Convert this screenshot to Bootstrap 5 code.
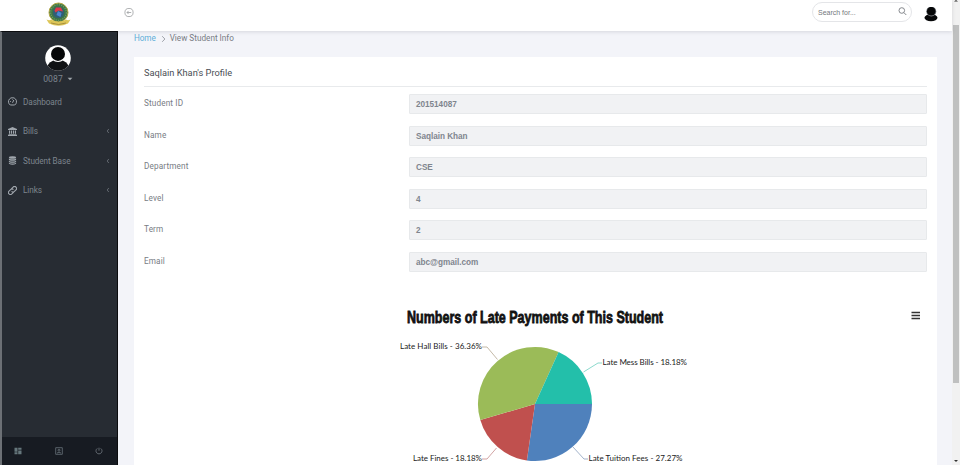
<!DOCTYPE html>
<html lang="en">
<head>
<meta charset="utf-8">
<title>View Student Info</title>
<link href="https://cdn.jsdelivr.net/npm/bootstrap@5.3.0/dist/css/bootstrap.min.css" rel="stylesheet">
<style>
html,body{height:465px;overflow:hidden}
body{font-family:Roboto,"Liberation Sans",sans-serif;font-size:8.2px;line-height:12px;color:#787c84;background:#f3f4f9}
svg{display:block;flex:none}
.topbar{height:31px;background:#fff;box-shadow:0 1px 4px rgba(60,60,80,.16);z-index:2}
.brand-box{width:118px;height:31px;padding:2px 0 0 46px}
.toggle-ico{margin:8px 0 0 6px}
.search-box{width:100px;height:20px;margin-top:2px;padding:0 4px 0 5px;border:1px solid #e4e5e8;border-radius:10px;font:7px/19px "Liberation Sans",sans-serif;color:#74777c}
.user-ico{margin:7px 14px 0 12px}
.side{width:118px;background:#272c33;border-left:2px solid #6c7075;border-right:1px solid #0b0c0e;border-top:1px solid #08090b;color:#7d858e}
.side-user{padding:13px 3px 0 0;height:55px}
.side-num{line-height:10px;padding-top:2px;font-size:8.6px;letter-spacing:.1px}
.side-link{height:29.5px;padding:0 7px 0 6px;letter-spacing:-.08px}
.side-link svg{margin-right:6px}
.side-link .chev{margin:0}
.side-foot{height:29px;background:#171b22;padding:0 14px 0 12px}
.crumbs{height:26px;padding:1px 0 0 16px}
.crumbs a{color:#5faed8;letter-spacing:-.1px}
.crumb-sep{margin:4px 3px 0 4px}
.profile{width:803px;margin-left:16px;padding:0 10px;background:#fff}
.profile-head{height:30px;line-height:31px;font-size:9.25px;color:#4a4e54;border-bottom:1px solid #e8eaec}
.fields{padding-top:7px}
.field-row{height:31.6px}
.field-label{width:265px;padding-top:3px;letter-spacing:.14px}
.field-val{height:20px;padding:0 6px;border:1px solid #e7e9eb;border-radius:1px;background:#f1f2f4;font:bold 8.2px/19px "Liberation Sans",sans-serif;letter-spacing:-.03px;color:#7f858e}
.chart{margin:10px -10px 0}
.sbar{width:8px;height:465px;background:#f1f1f1}
.sbar-thumb{height:358px;margin-left:1px;margin-right:1px;background:#bfc0c0}
</style>
<script src="https://cdn.jsdelivr.net/npm/bootstrap@5.3.0/dist/js/bootstrap.bundle.min.js"></script>
</head>
<body>
<div class="d-flex h-100">
 <div class="d-flex flex-column flex-grow-1">
  <header class="topbar d-flex position-relative align-items-start flex-shrink-0">
   <div class="brand-box">
    <svg width="25" height="25" viewBox="0 0 25 25">
     <circle cx="12.500" cy="10.5" r="9.5" fill="#3b7548" stroke="#b4a743"/>
     <circle cx="12.500" cy="10.5" r="7.8" fill="none" stroke="#739a60" stroke-width="1.2" stroke-dasharray="1.3 1"/>
     <circle cx="12.500" cy="10.5" r="5.6" fill="#315e77"/>
     <path d="M8.500 8.500l1.500-3 5 0 2 4-4.500-1-3 2z" fill="#e03a48"/>
     <path d="M12 9l3.500 2-1 4-4-2z" fill="#4a87d4"/>
     <path d="M.5 17.500q3 1.500 4.500 0 7.500 4.500 15 0 2 1.500 4.500 0l-2.500 4q-9.500 4.500-19 0z" fill="#ddc657"/>
     <path d="M5 21q7.500 3 15 0" fill="none" stroke="#9b813a" stroke-width=".8"/>
    </svg>
   </div>
   <svg class="toggle-ico" width="10" height="10" viewBox="0 0 10 10" fill="none" stroke="#9a9da0" stroke-width=".8"><circle cx="5" cy="4.5" r="4.1"/><path d="M7.2 4.5H3M4.6 2.9L3 4.5l1.6 1.6"/></svg>
   <div class="search-box d-flex justify-content-between ms-auto"><span>Search for...</span>
    <svg class="mt-1" width="9" height="9" viewBox="0 0 9 9" fill="none" stroke="#777b80" stroke-width=".9"><circle cx="3.8" cy="3.5" r="2.8"/><path d="M5.9 5.6L8.3 8"/></svg>
   </div>
   <svg class="user-ico" width="14" height="15" viewBox="0 0 14 15"><ellipse cx="7" cy="10.8" rx="6.5" ry="3.5" fill="#060708"/><circle cx="7.3" cy="4.5" r="5" fill="#777b80"/><circle cx="7.2" cy="4.2" r="4.3" fill="#050607"/></svg>
  </header>
  <div class="d-flex flex-grow-1">
   <nav class="side d-flex flex-column flex-shrink-0">
    <div class="side-user d-flex flex-column align-items-center">
     <svg width="26" height="27" viewBox="0 0 26 27"><defs><clipPath id="av"><circle cx="13" cy="13" r="12.8"/></clipPath></defs><g clip-path="url(#av)"><rect width="26" height="27" fill="#fff"/><ellipse cx="13" cy="24" rx="11" ry="9.500" fill="#101214"/><circle cx="13" cy="9.2" r="7.9" fill="#fff"/><circle cx="13" cy="8.900" r="7" fill="#060708"/></g></svg>
     <div class="side-num d-flex align-items-center">0087<svg class="ms-1" width="6" height="4" viewBox="0 0 6 4"><path d="M.6.8h4.8L3 3.2z" fill="#a0a6ac"/></svg></div>
    </div>
    <a class="side-link d-flex align-items-center text-reset text-decoration-none"><svg width="9" height="9" viewBox="0 0 9 9" fill="none" stroke="#a0a6ad"><path d="M2.300 8a4 4 0 1 1 4.4 0z"/><path d="M4.5 5.8L5.8 3M2 4.5h.8M4.5 1.8v.7"/></svg>Dashboard</a>
    <a class="side-link d-flex align-items-center text-reset text-decoration-none"><svg width="9" height="9" viewBox="0 0 9 9" fill="#a0a6ad"><path d="M4.5 0L9 2v1H0V2zM1 3.5h1.2v3.2H1zM3 3.5h1.1v3.2H3zM5 3.5h1.1v3.2H5zM6.9 3.5H8v3.2H6.9zM.5 7h8v.8H.5zM0 8.1h9V9H0z"/></svg>Bills<svg class="chev ms-auto" width="4" height="6" viewBox="0 0 4 6"><path d="M2.8 1L1.2 3l1.6 2" fill="none" stroke="#7b828a" stroke-width=".7"/></svg></a>
    <a class="side-link d-flex align-items-center text-reset text-decoration-none"><svg width="9" height="9" viewBox="0 0 9 9" fill="#a0a6ad"><ellipse cx="4.5" cy="1.5" rx="3.6" ry="1.3"/><path d="M.9 2.5q3.6 1.7 7.2 0v1.4q-3.6 1.7-7.2 0zM.9 4.7q3.6 1.7 7.2 0v1.2q-3.6 1.7-7.2 0zM.9 6.7q3.6 1.7 7.2 0v1q-3.6 2-7.2 0z"/></svg>Student Base<svg class="chev ms-auto" width="4" height="6" viewBox="0 0 4 6"><path d="M2.8 1L1.2 3l1.6 2" fill="none" stroke="#7b828a" stroke-width=".7"/></svg></a>
    <a class="side-link d-flex align-items-center text-reset text-decoration-none"><svg width="9" height="9" viewBox="0 0 9 9" fill="none" stroke="#a0a6ad" stroke-width="1.1"><g transform="rotate(-45 4.5 4.5)"><path d="M4.2 6.5H1.6a2 2 0 0 1 0-4h2.2a2 2 0 0 1 2 2M4.8 2.5h2.6a2 2 0 0 1 0 4H5.2a2 2 0 0 1-2-2"/></g></svg>Links<svg class="chev ms-auto" width="4" height="6" viewBox="0 0 4 6"><path d="M2.8 1L1.2 3l1.6 2" fill="none" stroke="#7b828a" stroke-width=".7"/></svg></a>
    <div class="side-foot d-flex align-items-center justify-content-between mt-auto">
     <svg width="8" height="8" viewBox="0 0 8 8" fill="#66777c"><path d="M.5.7h3v4h-3zM4.2.7h3.3v2H4.2zM.5 5.3h3v2h-3zM4.2 3.4h3.3v3.9H4.2z"/></svg>
     <svg width="8" height="8" viewBox="0 0 8 8" fill="none" stroke="#68747b" stroke-width=".8"><path d="M.7.7h6.6v6.6H.7zM2 6q2-1.5 4 0"/><circle cx="4" cy="3.2" r="1"/></svg>
     <svg width="8" height="8" viewBox="0 0 8 8" fill="none" stroke="#727a82" stroke-width=".8"><path d="M2.3 1.4a3 3 0 1 0 3.4 0M4 .7v3"/></svg>
    </div>
   </nav>
   <main>
    <div class="crumbs d-flex align-items-start"><a class="text-decoration-none">Home</a><svg class="crumb-sep" width="7" height="7" viewBox="0 0 7 7"><path d="M2.2.2L4.900 3 2.2 5.800" fill="none" stroke="#888c93" stroke-width=".8"/></svg><span>View Student Info</span></div>
    <section class="profile">
     <div class="profile-head">Saqlain Khan's Profile</div>
     <div class="fields">
      <div class="field-row d-flex"><div class="field-label">Student ID</div><div class="field-val flex-grow-1">201514087</div></div>
      <div class="field-row d-flex"><div class="field-label">Name</div><div class="field-val flex-grow-1">Saqlain Khan</div></div>
      <div class="field-row d-flex"><div class="field-label">Department</div><div class="field-val flex-grow-1">CSE</div></div>
      <div class="field-row d-flex"><div class="field-label">Level</div><div class="field-val flex-grow-1">4</div></div>
      <div class="field-row d-flex"><div class="field-label">Term</div><div class="field-val flex-grow-1">2</div></div>
      <div class="field-row d-flex"><div class="field-label">Email</div><div class="field-val flex-grow-1">abc@gmail.com</div></div>
     </div>
     <svg class="chart" width="803" height="172" viewBox="134 294 803 172">
      <text x="407" y="323" font-family="Liberation Sans,sans-serif" font-weight="700" font-size="17" textLength="256" lengthAdjust="spacingAndGlyphs" fill="#111" stroke="#111" stroke-width=".8">Numbers of Late Payments of This Student</text>
      <path d="M911.500 312.5h8.500M911.500 315.5h8.500M911.500 318.5h8.500" stroke="#333" stroke-width="1.6"/>
      <path d="M535 404H592A57 57 0 0 1 526.9 460.4Z" fill="#4f81bc"/>
      <path d="M535 404L526.9 460.4A57 57 0 0 1 480.3 420.1Z" fill="#c0504e"/>
      <path d="M535 404L480.3 420.1A57 57 0 0 1 558.6 352.1Z" fill="#9bbb58"/>
      <path d="M535 404L558.6 352.1A57 57 0 0 1 592 404Z" fill="#23bfaa"/>
      <g fill="none" stroke-width=".8"><path d="M482 347h5l10.500 12.500" stroke="#b5a790"/><path d="M602 363h-4l-14.500 9" stroke="#6fcfc0"/><path d="M482 459h5l9.500-11" stroke="#c58c8c"/><path d="M588 459h-4l-11-12" stroke="#8aa0bd"/></g>
      <g font-family="Lato,sans-serif" font-size="8" fill="#222"><text x="400" y="349.300" textLength="82">Late Hall Bills - 36.36%</text><text x="602.500" y="365.300" textLength="84.500">Late Mess Bills - 18.18%</text><text x="413" y="461.300" textLength="69">Late Fines - 18.18%</text><text x="588.500" y="461.300" textLength="94">Late Tuition Fees - 27.27%</text></g>
     </svg>
    </section>
   </main>
  </div>
 </div>
 <div class="sbar d-flex flex-column justify-content-between flex-shrink-0">
  <svg width="8" height="25" viewBox="0 0 8 25"><path d="M2 1.500L4 0l2 1.500z" fill="#333"/></svg>
  <div class="sbar-thumb"></div>
  <svg class="mt-auto" width="8" height="8" viewBox="0 0 8 8"><path d="M2 3h4L4 5z" fill="#333"/></svg>
 </div>
</div>
</body>
</html>
